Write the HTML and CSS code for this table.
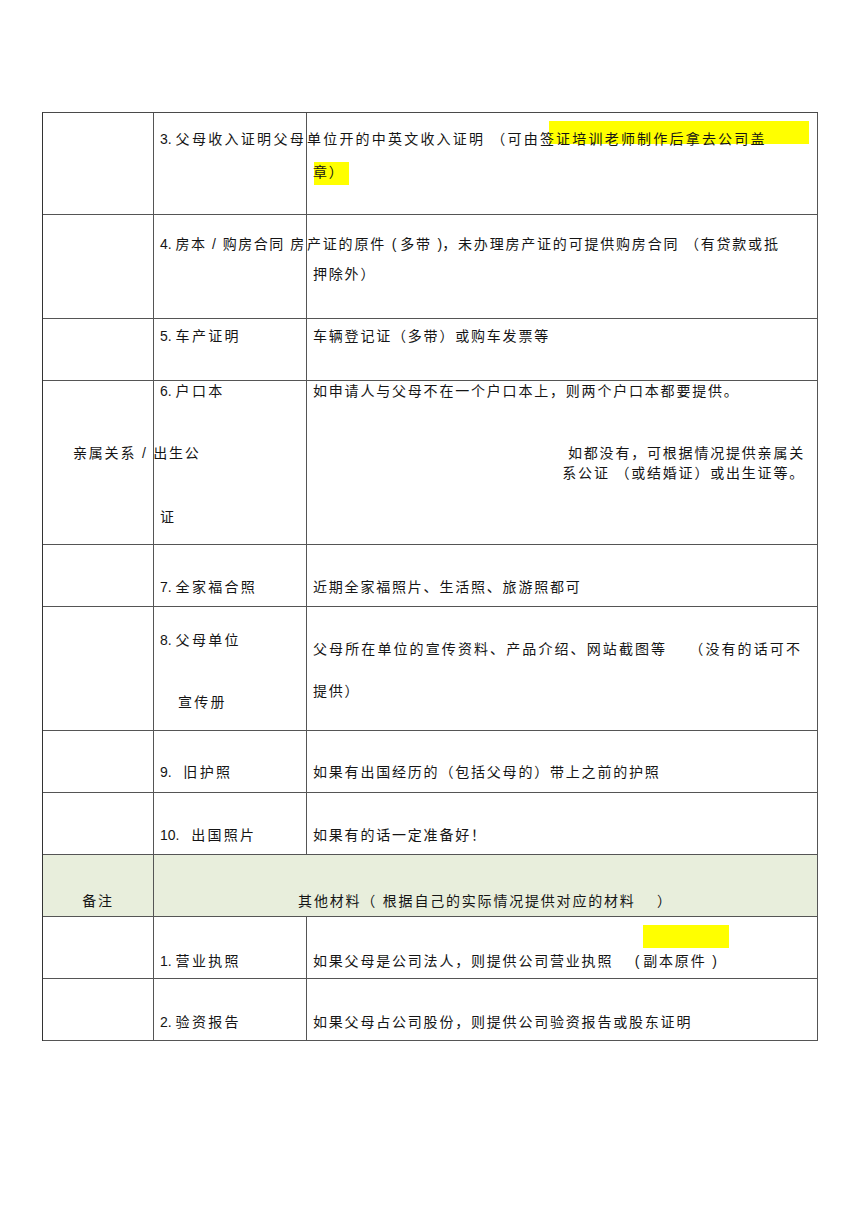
FILE: index.html
```html
<!DOCTYPE html>
<html lang="zh-CN">
<head>
<meta charset="utf-8">
<title>材料清单</title>
<link rel="stylesheet" href="styles.css">
</head>
<body>
<div class="table">
  <div class="row r3">
    <div class="cell c1"></div>
    <div class="cell c2"><span class="num">3. </span>父母收入证明父母</div>
    <div class="cell c3">
      <span class="hl hl-a"></span><span class="hl hl-b"></span>
      <div class="pull wide">单位开的中英文收入证明 （可由签证培训老师制作后拿去公司盖</div>
      <div>章）</div>
    </div>
  </div>
  <div class="row r4">
    <div class="cell c1"></div>
    <div class="cell c2"><span class="num">4. </span>房本 / 购房合同 房</div>
    <div class="cell c3">
      <div class="pull">产证的原件 <span class="num">( </span>多带 <span class="num">)</span>，未办理房产证的可提供购房合同 （有贷款或抵</div>
      <div>押除外）</div>
    </div>
  </div>
  <div class="row r5">
    <div class="cell c1"></div>
    <div class="cell c2"><span class="num">5. </span>车产证明</div>
    <div class="cell c3">车辆登记证（多带）或购车发票等</div>
  </div>
  <div class="row r6">
    <div class="cell c1"><div class="kin">亲属关系 / 出生公</div></div>
    <div class="cell c2">
      <div><span class="num">6. </span>户口本</div>
      <div class="zheng">证</div>
    </div>
    <div class="cell c3">
      <div>如申请人与父母不在一个户口本上，则两个户口本都要提供。</div>
      <div class="right">
        <div>如都没有，可根据情况提供亲属关</div>
        <div>系公证 （或结婚证）或出生证等。</div>
      </div>
    </div>
  </div>
  <div class="row r7">
    <div class="cell c1"></div>
    <div class="cell c2"><span class="num">7. </span>全家福合照</div>
    <div class="cell c3">近期全家福照片、生活照、旅游照都可</div>
  </div>
  <div class="row r8">
    <div class="cell c1"></div>
    <div class="cell c2">
      <div><span class="num">8. </span>父母单位</div>
      <div class="indent">宣传册</div>
    </div>
    <div class="cell c3">
      <div class="wider">父母所在单位的宣传资料、产品介绍、网站截图等　 （没有的话可不</div>
      <div>提供）</div>
    </div>
  </div>
  <div class="row r9">
    <div class="cell c1"></div>
    <div class="cell c2"><span class="num">9.&nbsp;&nbsp; </span>旧护照</div>
    <div class="cell c3">如果有出国经历的（包括父母的）带上之前的护照</div>
  </div>
  <div class="row r10">
    <div class="cell c1"></div>
    <div class="cell c2"><span class="num">10.&nbsp;&nbsp; </span>出国照片</div>
    <div class="cell c3">如果有的话一定准备好！</div>
  </div>
  <div class="row note">
    <div class="cell c1 center">备注</div>
    <div class="cell span center">其他材料（ 根据自己的实际情况提供对应的材料　 ）</div>
  </div>
  <div class="row r11">
    <div class="cell c1"></div>
    <div class="cell c2"><span class="num">1. </span>营业执照</div>
    <div class="cell c3"><span class="hl hl-c"></span>如果父母是公司法人，则提供公司营业执照　 <span class="num">( </span>副本原件 <span class="num">)</span></div>
  </div>
  <div class="row r12">
    <div class="cell c1"></div>
    <div class="cell c2"><span class="num">2. </span>验资报告</div>
    <div class="cell c3">如果父母占公司股份，则提供公司验资报告或股东证明</div>
  </div>
</div>
</body>
</html>
```

FILE: styles.css
```css
html, body {
  margin: 0;
  padding: 0;
  background: #ffffff;
}

body {
  font-family: "Liberation Sans", "Noto Sans CJK SC", sans-serif;
  font-size: 14px;
  letter-spacing: 1.8px;
  color: #151515;
}

.num {
  letter-spacing: 0;
}

.table {
  margin: 112px 0 0 42px;
  width: 776px;
  box-sizing: border-box;
  border-top: 1px solid #4a4a4a;
  border-left: 1px solid #333;
}

.row {
  display: grid;
  grid-template-columns: 111px 153px 511px;
}

.cell {
  box-sizing: border-box;
  border-right: 1px solid #555;
  border-bottom: 1px solid #555;
  white-space: nowrap;
  line-height: 20px;
  position: relative;
}

.c2 {
  padding-left: 6px;
  letter-spacing: 2.3px;
}

.c3 {
  padding-left: 6px;
  z-index: 0;
}

.span {
  grid-column: 2 / 4;
}

.center {
  text-align: center;
}

.pull {
  margin-left: -6px;
}

.wide {
  letter-spacing: 2.2px;
}

.wider {
  letter-spacing: 2.1px;
}

.hl {
  position: absolute;
  background: #ffff00;
  z-index: -1;
}

.hl-a { left: 242px; top: 8px; width: 260px; height: 23px; }
.hl-b { left: 7px; top: 49px; width: 35px; height: 23px; }
.hl-c { left: 336px; top: 8px; width: 86px; height: 23px; }

/* row heights and text placement */
.r3 { height: 102px; }
.r3 .cell { padding-top: 10px; line-height: 33px; }

.r4 { height: 104px; }
.r4 .cell { padding-top: 14px; line-height: 30px; }
.r4 .c2 { letter-spacing: 1.5px; }

.r5 { height: 62px; }
.r5 .cell { padding-top: 7px; }

.r6 { height: 164px; }
.r6 .cell { padding-top: 0; }
.kin { margin-top: 62px; padding-left: 30px; letter-spacing: 1.8px; }
.zheng { margin-top: 106px; }
.right { margin-top: 42px; text-align: right; padding-right: 12px; line-height: 20px; }

.r7 { height: 62px; }
.r7 .cell { padding-top: 32px; }

.r8 { height: 124px; }
.r8 .c2 { padding-top: 23px; }
.r8 .c2 .indent { margin-top: 42px; padding-left: 18px; }
.r8 .c3 { padding-top: 21px; line-height: 42px; }

.r9 { height: 62px; }
.r9 .cell { padding-top: 31px; }

.r10 { height: 62px; }
.r10 .cell { padding-top: 32px; }

.note { height: 62px; }
.note .cell { background: #e8eedc; padding-top: 36px; }

.r11 { height: 62px; }
.r11 .cell { padding-top: 34px; }

.r12 { height: 62px; }
.r12 .cell { padding-top: 33px; }
```
